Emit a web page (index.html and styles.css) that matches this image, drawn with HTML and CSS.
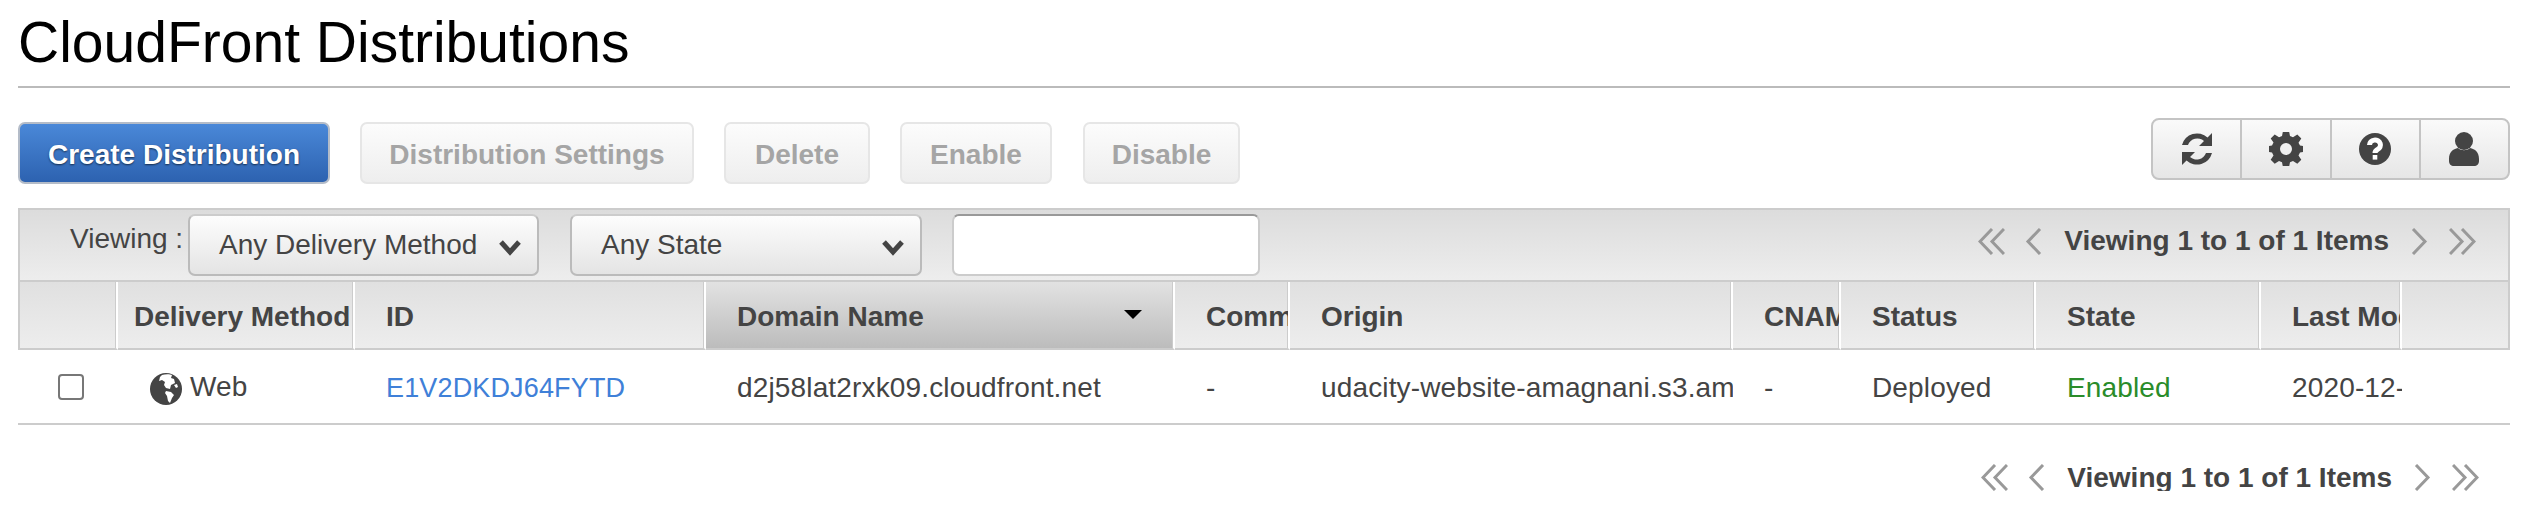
FILE: index.html
```html
<!DOCTYPE html>
<html lang="en">
<head>
    <meta charset="UTF-8">
    <title>CloudFront Distributions</title>
    <link rel="stylesheet" href="styles.css">
</head>
<body>
    <svg class="defs" width="0" height="0">
        <symbol id="first" viewBox="0 0 27 27"><path d="M14 1 2 13.500 14 26M26 1 14 13.500 26 26"/></symbol>
        <symbol id="prev" viewBox="0 0 17 27"><path d="M15 1 3 13.500 15 26"/></symbol>
        <symbol id="next" viewBox="0 0 17 27"><path d="M2 1 14 13.500 2 26"/></symbol>
        <symbol id="last" viewBox="0 0 27 27"><path d="M1 1 13 13.500 1 26M13 1 25 13.500 13 26"/></symbol>
        <symbol id="caret" viewBox="0 0 22 16"><path d="M2 2 11 12 20 2"/></symbol>
    </svg>

    <h1 class="page-title">CloudFront Distributions</h1>

    <div class="actions">
        <button class="btn btn-primary">Create Distribution</button>
        <button class="btn btn-disabled btn-settings">Distribution Settings</button>
        <button class="btn btn-disabled btn-delete">Delete</button>
        <button class="btn btn-disabled btn-enable">Enable</button>
        <button class="btn btn-disabled btn-disable">Disable</button>
        <div class="icon-group">
            <button class="icon-btn">
                <svg width="34" height="34" viewBox="0 0 34 34"><path class="fill-dark" d="M32 1v13H19l5-5A10 10 0 0 0 8 13H2A15.500 15.500 0 0 1 27.500 5.500ZM2 33V20h13l-5 5A10 10 0 0 0 26 21h6A15.500 15.500 0 0 1 6.500 28.500Z"/></svg>
            </button>
            <button class="icon-btn">
                <svg width="34" height="34" viewBox="0 0 34 34"><path class="fill-dark" fill-rule="evenodd" d="M14 1h6l1 5 3 1.300 4.300-2.800 4 4-2.800 4.300L31 15.500l3 .5v6l-3 .5-1.500 3 2.800 4.300-4 4-4.300-2.800-3 1.300-1 5h-6l-1-5-3-1.300-4.300 2.800-4-4 2.800-4.300L3 22.500 0 22v-6l3-.5 1.500-3L1.700 8.500l4-4L10 7.300 13 6ZM17 13a6 6 0 1 0 0 12 6 6 0 0 0 0-12Z" transform="translate(0 -2)"/></svg>
            </button>
            <button class="icon-btn">
                <svg width="34" height="34" viewBox="0 0 34 34"><circle class="fill-dark" cx="17" cy="17" r="16"/><path class="stroke-white" d="M11.500 13a5.500 5 0 1 1 8 4.500c-1.800 1-2.500 1.800-2.500 3.500"/><rect class="fill-white" x="14.700" y="23" width="4.600" height="4.600"/></svg>
            </button>
            <button class="icon-btn">
                <svg width="32" height="34" viewBox="0 0 32 34"><circle class="fill-dark" cx="16" cy="9" r="9"/><path class="fill-dark" d="M1 27c0-7 4-10 9-11 3 3 9 3 12 0 5 1 9 4 9 11v2c0 3-2 5-5 5H6c-3 0-5-2-5-5Z"/></svg>
            </button>
        </div>
    </div>

    <div class="toolbar">
        <span class="toolbar-label">Viewing :</span>
        <div class="select select-method">Any Delivery Method <svg class="caret"><use href="#caret"/></svg></div>
        <div class="select select-state">Any State <svg class="caret"><use href="#caret"/></svg></div>
        <input class="search" type="text">
        <div class="pager pager-top">
            <svg class="chev chev-wide"><use href="#first"/></svg>
            <svg class="chev"><use href="#prev"/></svg>
            <span class="pager-text">Viewing 1 to 1 of 1 Items</span>
            <svg class="chev"><use href="#next"/></svg>
            <svg class="chev chev-wide"><use href="#last"/></svg>
        </div>
    </div>

    <table class="dist-table">
        <colgroup>
            <col class="col-check"><col class="col-method"><col class="col-id"><col class="col-domain"><col class="col-comment">
            <col class="col-origin"><col class="col-cname"><col class="col-status"><col class="col-state"><col class="col-modified"><col class="col-end">
        </colgroup>
        <thead>
            <tr>
                <th></th>
                <th class="tight">Delivery Method</th>
                <th>ID</th>
                <th class="sorted">Domain Name<span class="sort-arrow"></span></th>
                <th>Comment</th>
                <th>Origin</th>
                <th>CNAMEs</th>
                <th>Status</th>
                <th>State</th>
                <th>Last Modified</th>
                <th></th>
            </tr>
        </thead>
        <tbody>
            <tr>
                <td class="check-cell"><span class="checkbox"></span></td>
                <td class="method-cell">
                    <svg class="globe" width="32" height="32" viewBox="0 0 32 32"><circle class="fill-dark" cx="16" cy="16" r="16"/><path class="fill-white" d="M12 2c3-1 8-1 10 0l-1 3 3 1 1 4-4 2-1 4-4-1-2-3 1-3-3-2-3 1 1-4ZM16 18l5 1 3 3-2 3-2 5-2-2-1-5-2-3ZM24 12l3-1 1 3-2 1Z"/></svg>
                    Web
                </td>
                <td><a class="dist-link" href="#">E1V2DKDJ64FYTD</a></td>
                <td>d2j58lat2rxk09.cloudfront.net</td>
                <td>-</td>
                <td>udacity-website-amagnani.s3.amazonaws.com</td>
                <td>-</td>
                <td>Deployed</td>
                <td class="enabled">Enabled</td>
                <td>2020-12-</td>
                <td></td>
            </tr>
        </tbody>
    </table>

    <div class="pager pager-bottom">
        <svg class="chev chev-wide"><use href="#first"/></svg>
        <svg class="chev"><use href="#prev"/></svg>
        <span class="pager-text">Viewing 1 to 1 of 1 Items</span>
        <svg class="chev"><use href="#next"/></svg>
        <svg class="chev chev-wide"><use href="#last"/></svg>
    </div>
</body>
</html>
```

FILE: styles.css
```css
* {
    box-sizing: border-box;
}
body {
    margin: 0;
    padding: 0 14px 0 18px;
    font-family: "Liberation Sans", Arial, sans-serif;
    font-size: 28px;
    color: #444;
    background-color: #fff;
    overflow: hidden;
}
.defs {
    position: absolute;
}
.page-title {
    margin: 0;
    height: 88px;
    padding-top: 11px;
    font-size: 57px;
    line-height: 62px;
    font-weight: 400;
    color: #000;
    border-bottom: 2px solid #bbb;
}
.actions {
    display: flex;
    align-items: flex-start;
    padding-top: 30px;
}
.btn {
    height: 62px;
    margin-top: 4px;
    margin-right: 30px;
    padding: 4px 0 0;
    font-family: inherit;
    font-size: 28px;
    font-weight: 700;
    border-radius: 7px;
}
.btn-primary {
    width: 312px;
    color: #fff;
    text-shadow: 0 1px 2px rgba(0,0,0,0.6);
    border: 2px solid #b4bcc8;
    background: linear-gradient(#4a88d8, #2d62b0);
}
.btn-disabled {
    color: #a5a5a5;
    border: 2px solid #e6e6e6;
    background: linear-gradient(#fcfcfc, #eee);
}
.btn-settings {
    width: 334px;
}
.btn-delete {
    width: 146px;
}
.btn-enable {
    width: 152px;
    margin-right: 31px;
}
.btn-disable {
    width: 157px;
}
.icon-group {
    display: flex;
    margin-left: auto;
    width: 359px;
    height: 62px;
    border: 2px solid #c4c4c4;
    border-radius: 8px;
    overflow: hidden;
    background: linear-gradient(#fafafa, #e6e6e6);
}
.icon-btn {
    flex: 1;
    display: flex;
    align-items: center;
    justify-content: center;
    padding: 0;
    border: 0;
    border-right: 2px solid #c4c4c4;
    background: none;
}
.icon-btn:last-child {
    border-right: 0;
}
.fill-dark {
    fill: #444;
}
.fill-white {
    fill: #fff;
}
.stroke-white {
    fill: none;
    stroke: #fff;
    stroke-width: 5;
}
.toolbar {
    display: flex;
    align-items: flex-start;
    height: 74px;
    margin-top: 24px;
    padding-top: 4px;
    border: 2px solid #ccc;
    background: linear-gradient(#dcdcdc, #ededed);
}
.toolbar-label {
    width: 168px;
    padding-left: 50px;
    line-height: 50px;
}
.select {
    display: flex;
    align-items: center;
    justify-content: space-between;
    height: 62px;
    padding: 0 16px 0 29px;
    border: 2px solid #bbb;
    border-top-color: #ccc;
    border-radius: 7px;
    background: linear-gradient(#fdfdfd, #e4e4e4);
}
.select-method {
    width: 351px;
    margin-right: 31px;
}
.select-state {
    width: 352px;
    margin-right: 30px;
}
.caret {
    width: 22px;
    height: 16px;
    margin-top: 6px;
    fill: none;
    stroke: #444;
    stroke-width: 5;
}
.search {
    width: 308px;
    height: 62px;
    padding: 0 10px;
    border: 2px solid #ccc;
    border-top-color: #999;
    border-radius: 7px;
    background-color: #fff;
}
.pager {
    display: flex;
    align-items: center;
    margin-left: auto;
}
.pager-top {
    height: 54px;
    margin-right: 32px;
}
.pager-bottom {
    justify-content: flex-end;
    height: 27px;
    margin-top: 39px;
    margin-right: 31px;
}
.pager-text {
    margin: 0 22px;
    font-weight: 700;
}
.chev {
    width: 17px;
    height: 27px;
    fill: none;
    stroke: #999;
    stroke-width: 3;
}
.chev-wide {
    width: 27px;
    margin: 0 20px 0 0;
}
.pager-text + .chev + .chev-wide {
    margin: 0 0 0 21px;
}
.dist-table {
    width: 100%;
    table-layout: fixed;
    border-collapse: separate;
    border-spacing: 0;
}
.col-check {
    width: 100px;
}
.col-method {
    width: 237px;
}
.col-id {
    width: 351px;
}
.col-domain {
    width: 469px;
}
.col-comment {
    width: 115px;
}
.col-origin {
    width: 443px;
}
.col-cname {
    width: 108px;
}
.col-status {
    width: 195px;
}
.col-state {
    width: 225px;
}
.col-modified {
    width: 141px;
}
.dist-table th {
    position: relative;
    height: 68px;
    padding: 4px 0 0 31px;
    text-align: left;
    font-weight: 700;
    white-space: nowrap;
    overflow: hidden;
    border-right: 2px solid #fff;
    border-bottom: 2px solid #ccc;
    box-shadow: inset -1px 0 0 #ccc;
    background: linear-gradient(#e0e0e0, #ededed);
}
.dist-table th:first-child {
    border-left: 2px solid #ccc;
}
.dist-table th:last-child {
    border-right: 2px solid #ccc;
    box-shadow: none;
}
.dist-table th.tight {
    padding-left: 16px;
}
.dist-table th.sorted {
    background: linear-gradient(#e2e2e2, #bcbcbc);
}
.sort-arrow {
    position: absolute;
    top: 28px;
    right: 31px;
    border-left: 9px solid transparent;
    border-right: 9px solid transparent;
    border-top: 9px solid #000;
}
.dist-table td {
    height: 75px;
    padding: 3px 0 0 31px;
    letter-spacing: 0.15px;
    white-space: nowrap;
    overflow: hidden;
    border-bottom: 2px solid #ccc;
}
.dist-table td.check-cell {
    padding: 0 0 0 40px;
}
.checkbox {
    display: block;
    width: 26px;
    height: 26px;
    border: 2px solid #777;
    border-radius: 4px;
}
.dist-table td.method-cell {
    padding-left: 32px;
}
.globe {
    vertical-align: middle;
}
.dist-link {
    font-size: 27px;
    color: #3f80d8;
    text-decoration: none;
}
.enabled {
    color: #2a8c2a;
}
```
